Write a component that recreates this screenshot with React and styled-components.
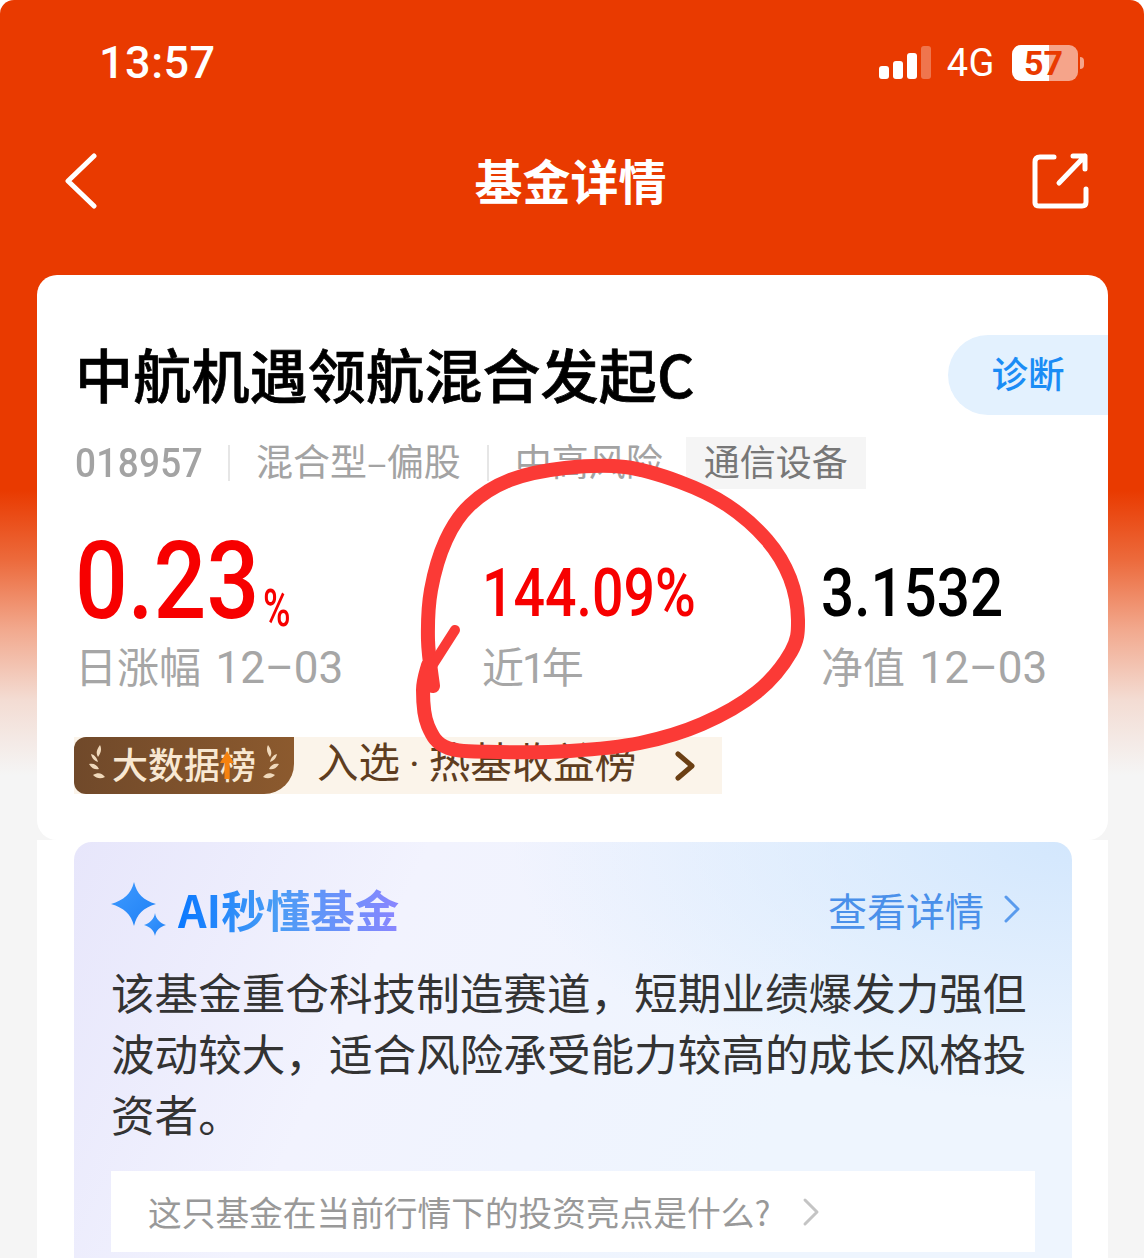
import React from 'react';
import styled, { createGlobalStyle } from 'styled-components';

const CJK = '"Noto Sans CJK SC", "Noto Sans", sans-serif';

const GlobalStyle = createGlobalStyle`
  html, body { margin: 0; padding: 0; background: #fff; }
  * { box-sizing: border-box; }
`

const Page = styled.div`
  position: relative;
  width: 1144px;
  height: 1258px;
  overflow: hidden;
  border-radius: 14px 14px 0 0;
  font-family: ${CJK};
  background: linear-gradient(to bottom, #e93a00 0, #e93a00 490px, #ec6a3c 560px, #f2a98e 630px, #f3dcd3 700px, #f5f5f5 775px);
`
const StatusBar = styled.div`
  height: 125px;
  display: flex;
  align-items: center;
  justify-content: space-between;
  padding: 0 66px 0 99px;
  color: #fff;
`
const Time = styled.span`
  font-family: Roboto, sans-serif;
  font-size: 45px;
  font-weight: 500;
  letter-spacing: 0.5px;
`
const StatusRight = styled.div`
  display: flex;
  align-items: center;
  gap: 16px;
`
const Network = styled.span`
  font-family: Roboto, sans-serif;
  font-size: 38px;
  letter-spacing: 0.5px;
`
const Battery = styled.div`
  position: relative;
  width: 66px;
  height: 36px;
  margin-left: 1px;
  border-radius: 9px;
  background: linear-gradient(to right, #fff 0, #fff 56%, #f5a48a 56%, #f5a48a 100%);
  color: #e93a00;
  font-family: Roboto, sans-serif;
  font-size: 34px;
  font-weight: 700;
  line-height: 36px;
  text-align: center;
  padding-right: 3px;
  &::after {
    content: '';
    position: absolute;
    left: 68px;
    top: 12px;
    width: 4px;
    height: 12px;
    border-radius: 0 6px 6px 0;
    background: #f5a48a;
  }
`
const NavBar = styled.div`
  height: 110px;
  display: flex;
  align-items: center;
  justify-content: space-between;
  padding: 0 54px 0 64px;
  margin-bottom: 40px;
`
const NavTitle = styled.h1`
  margin: 0 0 2px 11px;
  color: #fff;
  font-size: 48px;
  font-weight: 700;
  line-height: 1;
`
const Card = styled.section`
  margin: 0 36px 0 37px;
  height: 565px;
  background: #fff;
  border-radius: 20px;
`
const TitleRow = styled.div`
  display: flex;
  align-items: center;
  justify-content: space-between;
  padding: 60px 0 0 38px;
`
const FundName = styled.h2`
  margin: 0 0 4px;
  color: #000;
  font-size: 58px;
  font-weight: 500;
  line-height: 76px;
  letter-spacing: 0.2px;
  -webkit-text-stroke: 0.7px #000;
`
const Diagnose = styled.div`
  width: 160px;
  height: 80px;
  border-radius: 40px 0 0 40px;
  background: #e3f1fe;
  color: #1a8cf5;
  font-size: 36.5px;
  font-weight: 500;
  line-height: 76px;
  text-align: center;
`
const MetaRow = styled.div`
  display: flex;
  align-items: center;
  height: 52px;
  margin-top: 22px;
  padding-left: 38px;
  color: #a3a3a3;
  font-size: 37px;
`
const MetaText = styled.span`
  margin-bottom: 6px;
`
const FundCode = styled.span`
  font-family: Roboto, sans-serif;
  font-size: 41px;
  font-weight: 500;
  letter-spacing: 0.4px;
  display: inline-block;
  width: 127px;
  transform: scaleX(0.9);
  transform-origin: left;
  white-space: nowrap;
`
const Divider = styled.i`
  display: block;
  width: 2px;
  height: 36px;
  margin: 0 26px;
  background: #e6e6e6;
`
const SectorTag = styled.span`
  height: 52px;
  margin-left: 23px;
  padding: 0 18px;
  background: #f5f5f5;
  color: #777;
  font-size: 36px;
  line-height: 46px;
`
const Stats = styled.div`
  display: grid;
  grid-template-columns: 407px 339px 1fr;
  margin-top: 41px;
  padding-left: 38px;
`
const Stat = styled.div`
  display: flex;
  flex-direction: column;
`
const Value = styled.div`
  height: 100px;
  display: flex;
  align-items: flex-end;
  color: ${(p) => p.$color};
  font-family: Roboto, sans-serif;
  font-weight: 500;
  white-space: nowrap;
`
const BigNumber = styled.span`
  display: inline-block;
  width: 188px;
  font-size: 108px;
  line-height: 90px;
  margin-bottom: 4px;
  transform: scaleX(0.86);
  transform-origin: left;
`
const Percent = styled.span`
  font-size: 52px;
  font-weight: 500;
  line-height: 44px;
  margin-bottom: -1px;
  display: inline-block;
  transform: scaleX(0.72);
  transform-origin: left;
`
const MidNumber = styled.span`
  display: inline-block;
  font-size: 66px;
  line-height: 66px;
  margin-bottom: 3px;
  transform: scaleX(${(p) => p.$squeeze});
  transform-origin: left;
`
const Label = styled.div`
  margin-top: 10px;
  color: #a6a6a6;
  font-size: 42px;
  line-height: 50px;
  white-space: nowrap;
`
const LabelDate = styled.span`
  margin-left: 5px;
  font-family: Roboto, sans-serif;
  font-size: 44px;
  font-weight: 400;
`
const LabelDigit = styled.span`
  letter-spacing: -3px;
  margin-left: -2px;
  margin-right: -1px;
  font-family: Roboto, sans-serif;
`
const RankRow = styled.div`
  display: flex;
  width: 648px;
  height: 57px;
  margin: 43px 0 0 37px;
  background: #fbf4ea;
`
const RankBadge = styled.div`
  position: relative;
  width: 220px;
  display: flex;
  align-items: center;
  justify-content: space-between;
  padding: 0 13px 5px 13px;
  border-radius: 12px 0 30px 12px;
  background: linear-gradient(to right, #70492a, #8c5a2e);
  color: #f8e8d2;
  font-size: 36px;
  font-weight: 500;
  line-height: 52px;
`
const RankArrow = styled.svg`
  position: absolute;
  left: 146px;
  top: 14px;
`
const RankText = styled.div`
  flex: 1;
  display: flex;
  align-items: center;
  justify-content: space-between;
  padding: 0 27px 0 23px;
  color: #5e3d20;
  white-space: nowrap;
`
const RankLabel = styled.span`
  margin-bottom: 7px;
  font-size: 41.5px;
  line-height: 50px;
`
const RankDot = styled.span`
  margin: 0 9px;
  font-family: Roboto, sans-serif;
`
const LowerPanel = styled.section`
  margin: 0 36px 0 37px;
  height: 420px;
  background: #fff;
  padding: 2px 36px 0 37px;
`
const AiCard = styled.div`
  height: 420px;
  border-radius: 18px 18px 0 0;
  padding: 36px 37px 0 37px;
  background:
    radial-gradient(ellipse 560px 260px at 100% 0, #d3e7fd 0, rgba(211, 231, 253, 0) 100%),
    linear-gradient(115deg, #e7e6fb 0, #f2f3fe 30%, #eef5fe 70%, #eef5fe 100%);
`
const AiHeader = styled.div`
  height: 62px;
  display: flex;
  align-items: center;
  justify-content: space-between;
  padding-right: 14px;
`
const AiBrand = styled.div`
  display: flex;
  align-items: center;
  gap: 11px;
`
const AiTitle = styled.span`
  font-size: 44.5px;
  font-weight: 700;
  line-height: 62px;
  background: linear-gradient(to right, #0a78ff 0, #4a9df5 45%, #8a86ff 100%);
  -webkit-background-clip: text;
  background-clip: text;
  color: transparent;
`
const AiMore = styled.div`
  display: flex;
  align-items: center;
  gap: 19px;
  color: #4a90ea;
  font-size: 39px;
`
const AiText = styled.p`
  margin: 21px 0 0;
  width: 925px;
  color: #333;
  font-size: 43.6px;
  line-height: 61px;
`
const Question = styled.div`
  display: flex;
  align-items: center;
  gap: 32px;
  height: 81px;
  margin-top: 27px;
  padding-left: 37px;
  background: #fff;
  color: #999;
  font-size: 33.7px;
`
const Scribble = styled.svg`
  position: absolute;
  left: 0;
  top: 0;
  pointer-events: none;
`

// hand drawn loop round the yearly return
const loop = [
  [433, 686], [428, 640], [431, 590], [446, 540], [470, 505], [510, 480], [565, 468], [625, 467],
  [680, 482], [727, 505], [767, 540], [790, 578], [798, 620], [791, 652], [757, 692],
  [702, 724], [640, 743], [570, 751], [500, 752], [448, 748], [428, 726], [423, 690], [428, 665],
]

function smoothPath(points) {
  let d = `M${points[0][0]} ${points[0][1]}`
  for (let i = 0; i < points.length - 1; i++) {
    const p0 = points[i - 1] || points[i]
    const p1 = points[i]
    const p2 = points[i + 1]
    const p3 = points[i + 2] || p2
    const c1 = [p1[0] + (p2[0] - p0[0]) / 6, p1[1] + (p2[1] - p0[1]) / 6]
    const c2 = [p2[0] - (p3[0] - p1[0]) / 6, p2[1] - (p3[1] - p1[1]) / 6]
    d += ` C${c1[0]} ${c1[1]} ${c2[0]} ${c2[1]} ${p2[0]} ${p2[1]}`
  }
  return d
}

const Signal = () => (
  <svg width="52" height="33" viewBox="0 0 52 33">
    <rect x="0" y="20" width="10" height="13" rx="3" fill="#fff" />
    <rect x="14" y="15" width="10" height="18" rx="3" fill="#fff" />
    <rect x="28" y="7" width="10" height="26" rx="3" fill="#fff" />
    <rect x="42" y="0" width="10" height="33" rx="3" fill="#fff" opacity="0.3" />
  </svg>
)

const Back = () => (
  <svg width="34" height="58" viewBox="0 0 34 58">
    <path d="M30 5 L4 30 L30 55" fill="none" stroke="#fff" strokeWidth="5" strokeLinecap="round" strokeLinejoin="round" />
  </svg>
)

const Share = () => (
  <svg width="58" height="58" viewBox="0 0 58 58">
    <path d="M22 6 H8 Q3 6 3 11 V52 Q3 55 8 55 H50 Q54 55 54 51 V38" fill="none" stroke="#fff" strokeWidth="5" strokeLinecap="round" />
    <path d="M27 32 L53 5 M41 5 H53 V18" fill="none" stroke="#fff" strokeWidth="5" strokeLinecap="round" strokeLinejoin="round" />
  </svg>
)

const Laurel = ({ flip }) => (
  <svg width="20" height="38" viewBox="0 0 20 38" style={flip ? { transform: 'scaleX(-1)' } : undefined}>
    <path d="M13 1 C9 6 9 10 11 13 C14 9 15 5 13 1Z M4 10 C5 15 8 17 11 18 C10 14 8 11 4 10Z M2 20 C5 25 9 26 12 25 C10 21 7 19 2 20Z M6 31 C10 35 14 35 18 33 C15 29 11 28 6 31Z" fill="#f0d9bb" />
  </svg>
)

const Sparkle = () => (
  <svg width="56" height="54" viewBox="0 0 56 54">
    <defs>
      <linearGradient id="spark" x1="0" y1="0" x2="1" y2="1">
        <stop offset="0" stopColor="#3f9bff" />
        <stop offset="1" stopColor="#1f80f5" />
      </linearGradient>
    </defs>
    <path d="M23 0 C26 12 32 18 45 22 C32 26 26 32 23 44 C20 32 13 26 0 22 C13 18 20 12 23 0Z" fill="url(#spark)" />
    <path d="M44 31 C45 37 49 41 55 43 C49 45 45 48 44 54 C43 48 39 45 33 43 C39 41 43 37 44 31Z" fill="url(#spark)" />
  </svg>
)

const Chevron = ({ color, width = 3, size = 18, height = 30 }) => (
  <svg width={size} height={height} viewBox={`0 0 ${size} ${height}`}>
    <path d={`M3 3 L${size - 3} ${height / 2} L3 ${height - 3}`} fill="none" stroke={color} strokeWidth={width} strokeLinecap="round" strokeLinejoin="round" />
  </svg>
)

export default function App() {
  return (
    <Page>
      <GlobalStyle />
      <StatusBar>
        <Time>13:57</Time>
        <StatusRight>
          <Signal />
          <Network>4G</Network>
          <Battery>57</Battery>
        </StatusRight>
      </StatusBar>
      <NavBar>
        <Back />
        <NavTitle>基金详情</NavTitle>
        <Share />
      </NavBar>

      <Card>
        <TitleRow>
          <FundName>中航机遇领航混合发起C</FundName>
          <Diagnose>诊断</Diagnose>
        </TitleRow>
        <MetaRow>
          <FundCode>018957</FundCode>
          <Divider />
          <MetaText>混合型–偏股</MetaText>
          <Divider />
          <MetaText>中高风险</MetaText>
          <SectorTag>通信设备</SectorTag>
        </MetaRow>
        <Stats>
          <Stat>
            <Value $color="#f70000">
              <BigNumber>0.23</BigNumber>
              <Percent>%</Percent>
            </Value>
            <Label>日涨幅 <LabelDate>12–03</LabelDate></Label>
          </Stat>
          <Stat>
            <Value $color="#f70000">
              <MidNumber $squeeze={0.84}>144.09%</MidNumber>
            </Value>
            <Label>近<LabelDigit>1</LabelDigit>年</Label>
          </Stat>
          <Stat>
            <Value $color="#000">
              <MidNumber $squeeze={0.885}>3.1532</MidNumber>
            </Value>
            <Label>净值 <LabelDate>12–03</LabelDate></Label>
          </Stat>
        </Stats>
        <RankRow>
          <RankBadge>
            <Laurel />
            大数据榜
            <Laurel flip />
            <RankArrow width="14" height="28" viewBox="0 0 14 28">
              <path d="M7 0 L14 12 H9.5 V28 H4.5 V12 H0Z" fill="#f5820f" />
            </RankArrow>
          </RankBadge>
          <RankText>
            <RankLabel>入选<RankDot>·</RankDot>热基收益榜</RankLabel>
            <Chevron color="#6b3f14" width={5} size={20} height={30} />
          </RankText>
        </RankRow>
      </Card>

      <LowerPanel>
        <AiCard>
          <AiHeader>
            <AiBrand>
              <Sparkle />
              <AiTitle>AI秒懂基金</AiTitle>
            </AiBrand>
            <AiMore>
              查看详情
              <Chevron color="#5a9bed" />
            </AiMore>
          </AiHeader>
          <AiText>该基金重仓科技制造赛道，短期业绩爆发力强但波动较大，适合风险承受能力较高的成长风格投资者。</AiText>
          <Question>
            这只基金在当前行情下的投资亮点是什么?
            <Chevron color="#c4c4c4" />
          </Question>
        </AiCard>
      </LowerPanel>

      <Scribble width="1144" height="1258" viewBox="0 0 1144 1258">
        <path d={smoothPath(loop)} fill="none" stroke="#fb3a36" strokeWidth="14" strokeLinecap="round" strokeLinejoin="round" />
        <path d="M455 630 L432 666" fill="none" stroke="#fb3a36" strokeWidth="10" strokeLinecap="round" />
      </Scribble>
    </Page>
  )
}
